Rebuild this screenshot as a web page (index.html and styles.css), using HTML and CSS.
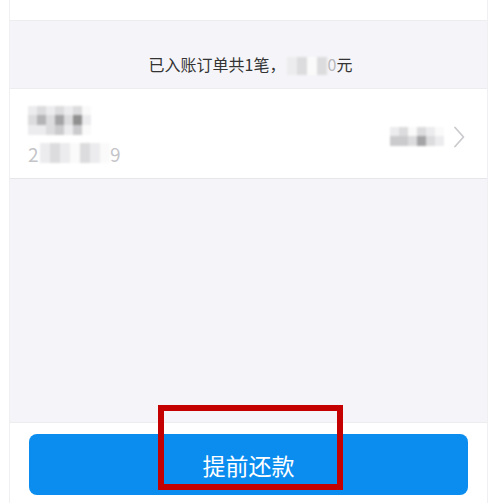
FILE: index.html
```html
<!DOCTYPE html>
<html lang="zh">
<head>
<meta charset="utf-8">
<title>已入账订单</title>
<link rel="stylesheet" href="styles.css">
</head>
<body>
<div class="phone">
  <div class="top"></div>
  <div class="summary">
    <span>已入账订单共1笔，</span><span class="amt"><span class="m m1"></span><span class="m m2"></span><span class="m m0"></span><span class="m m2"></span></span><span class="zero">0</span><span>元</span>
  </div>
  <div class="item">
    <div class="left">
      <div class="mosaic title">
        <span class="m m1"></span><span class="m m2"></span><span class="m m1"></span><span class="m m2"></span><span class="m m1"></span><span class="m m2"></span><span class="m m0"></span>
        <span class="m m2"></span><span class="m m4"></span><span class="m m2"></span><span class="m m5"></span><span class="m m2"></span><span class="m m6"></span><span class="m m1"></span>
        <span class="m m1"></span><span class="m m1"></span><span class="m m2"></span><span class="m m3"></span><span class="m m1"></span><span class="m m3"></span><span class="m m0"></span>
      </div>
      <div class="date">
        <span class="dg">2</span><span class="mosaic drow"><span class="m m1"></span><span class="m m2"></span><span class="m m1"></span><span class="m m0"></span><span class="m m2"></span><span class="m m1"></span><span class="m m0"></span></span><span class="dg">9</span>
      </div>
    </div>
    <div class="right">
      <div class="mosaic amount">
        <span class="m m1"></span><span class="m m2"></span><span class="m m0"></span><span class="m m2"></span><span class="m m1"></span><span class="m m0"></span>
        <span class="m m3"></span><span class="m m3"></span><span class="m m2"></span><span class="m m5"></span><span class="m m2"></span><span class="m m1"></span>
      </div>
      <svg class="chev" width="12" height="22" viewBox="0 0 12 22"><path d="M2 1.5 L10.5 11 L2 20.5" fill="none" stroke="#cbcbcf" stroke-width="1.8" stroke-linecap="round" stroke-linejoin="round"/></svg>
    </div>
  </div>
  <div class="gap"></div>
  <div class="bottom">
    <button class="btn">提前还款</button>
  </div>
</div>
<div class="mark"></div>
</body>
</html>
```

FILE: styles.css
```css
html, body {
  margin: 0;
  padding: 0;
  background: #ffffff;
  font-family: "Noto Sans CJK SC", "Noto Sans", sans-serif;
}
.phone {
  margin: 0 12px 0 9px;
  height: 503px;
  display: flex;
  flex-direction: column;
  border-left: 1px solid #f0f0f2;
  border-right: 1px solid #f0f0f2;
  background: #ffffff;
}
.top {
  height: 20px;
  border-bottom: 1px solid #ededf0;
  background: #ffffff;
}
.summary {
  height: 67px;
  background: #f5f5f9;
  display: flex;
  align-items: flex-end;
  justify-content: center;
  box-sizing: border-box;
  font-size: 16px;
  color: #333333;
  line-height: 22px;
  padding-bottom: 13px;
  padding-left: 4px;
}
.amt {
  display: inline-flex;
  width: 40px;
  height: 18px;
  margin-left: 2px;
  filter: blur(0.8px);
}
.amt .m { flex: 1; }
.zero { color: #b8b8bc; }
.item {
  height: 91px;
  background: #ffffff;
  border-top: 1px solid #ededf0;
  border-bottom: 1px solid #e6e6ea;
  display: flex;
  align-items: center;
  justify-content: space-between;
  padding: 0 22px 0 18px;
  box-sizing: border-box;
}
.left {
  display: flex;
  flex-direction: column;
  gap: 8px;
  padding-top: 2px;
}
.mosaic {
  display: grid;
  filter: blur(0.8px);
}
.title {
  grid-template-columns: repeat(7, 9px);
  grid-template-rows: 9px 10px 10px;
  width: 63px;
}
.date {
  display: flex;
  align-items: center;
  height: 20px;
  font-size: 19px;
  color: #c4c4c8;
}
.dg { width: 12px; }
.drow {
  grid-template-columns: repeat(7, 10px);
  grid-template-rows: 20px;
  width: 70px;
}
.right {
  display: flex;
  align-items: center;
  gap: 9px;
  padding-top: 6px;
}
.amount {
  grid-template-columns: repeat(6, 9px);
  grid-template-rows: 9px 10px;
}
.m { display: block; }
.m0 { background: #fafafa; }
.m1 { background: #ececee; }
.m2 { background: #dcdcde; }
.m3 { background: #cbcbcd; }
.m4 { background: #b4b4b6; }
.m5 { background: #a4a4a6; }
.m6 { background: #909090; }
.gap {
  flex: 1;
  background: #f5f5f9;
}
.bottom {
  height: 81px;
  border-top: 1px solid #ededf0;
  background: #ffffff;
  padding: 11px 19px 8px 19px;
  box-sizing: border-box;
}
.btn {
  display: block;
  width: 100%;
  height: 61px;
  border: none;
  border-radius: 8px;
  background: #0b8df0;
  color: #ffffff;
  font-family: "Noto Sans CJK SC", "Noto Sans", sans-serif;
  font-size: 23px;
  padding: 0;
}
.mark {
  position: absolute;
  left: 158px;
  top: 405px;
  width: 185px;
  height: 85px;
  box-sizing: border-box;
  border: 6px solid #c40000;
}
```
